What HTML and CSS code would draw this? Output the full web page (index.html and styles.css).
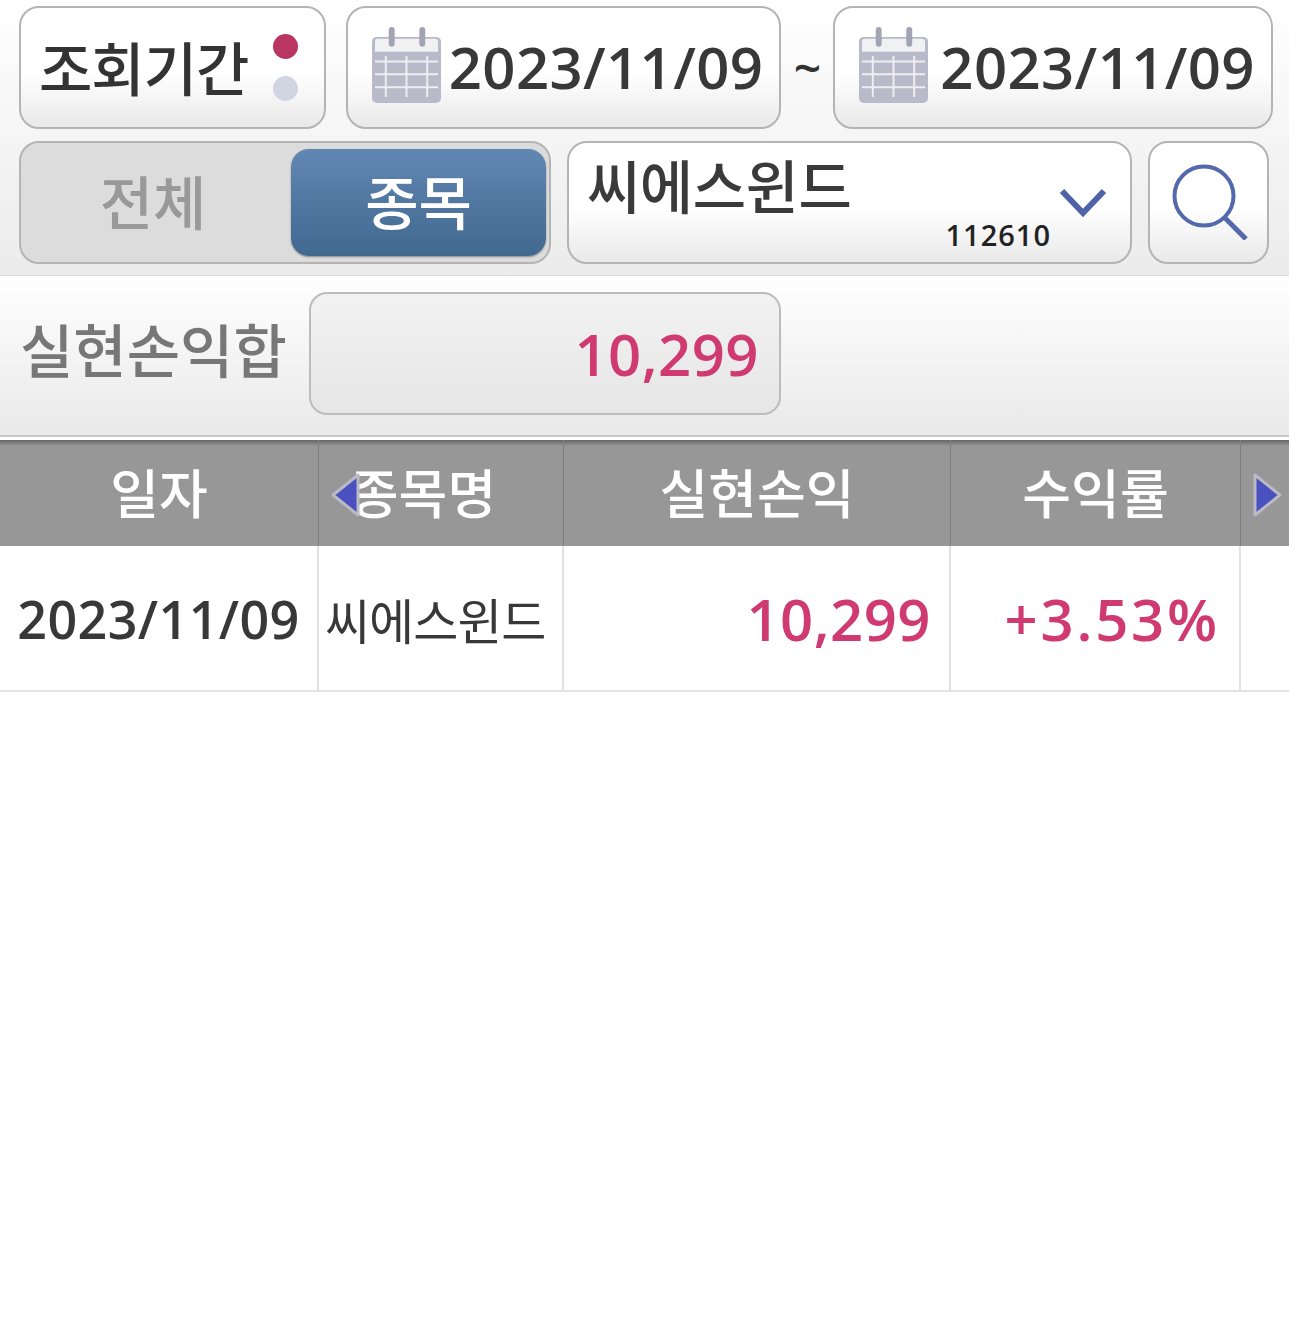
FILE: index.html
```html
<!DOCTYPE html>
<html lang="ko">
<head>
  <meta charset="UTF-8">
  <title>실현손익</title>
  <link rel="stylesheet" href="styles.css">
</head>
<body>
  <svg class="icon-defs" width="0" height="0">
    <symbol id="calendar" viewBox="0 0 70 78">
      <path d="M5 11h60a5 5 0 0 1 5 5v57a5 5 0 0 1-5 5H5a5 5 0 0 1-5-5V16a5 5 0 0 1 5-5z" fill="#b9bac9"/>
      <path d="M3 26V16a3 3 0 0 1 3-3h58a3 3 0 0 1 3 3v10z" fill="#f1f1f4"/>
      <rect x="17" y="1" width="6" height="20" rx="3" fill="#a2a3b3"/>
      <rect x="48" y="1" width="6" height="20" rx="3" fill="#a2a3b3"/>
      <path d="M3 36h64M3 49h64M3 62h64M14 30v42M35 30v42M56 30v42" stroke="#eeeef2" stroke-width="2" fill="none"/>
    </symbol>
  </svg>

  <div class="filter-panel">
    <div class="filter-row top-row">
      <div class="btn period-btn">
        <span class="period-label">조회기간</span>
        <span class="dots"><i class="dot on"></i><i class="dot"></i></span>
      </div>
      <div class="btn date-btn">
        <svg class="cal"><use href="#calendar"/></svg>
        <span class="date">2023/11/09</span>
      </div>
      <span class="tilde">~</span>
      <div class="btn date-btn date-end">
        <svg class="cal"><use href="#calendar"/></svg>
        <span class="date">2023/11/09</span>
      </div>
    </div>
    <div class="filter-row bottom-row">
      <div class="toggle">
        <span class="toggle-off">전체</span>
        <span class="toggle-on">종목</span>
      </div>
      <div class="btn stock-select">
        <span class="stock-name">씨에스윈드</span>
        <span class="stock-code">112610</span>
        <svg class="chevron" viewBox="0 0 48 30"><path d="M3 3l21 22L45 3" fill="none" stroke="#4f62a8" stroke-width="6"/></svg>
      </div>
      <div class="btn search-btn">
        <svg class="search" viewBox="0 0 76 76"><circle cx="32" cy="32" r="29.5" fill="none" stroke="#5468ad" stroke-width="4"/><path d="M52 53l22 22" stroke="#5468ad" stroke-width="5" fill="none"/></svg>
      </div>
    </div>
  </div>

  <div class="summary-panel">
    <span class="summary-label">실현손익합</span>
    <div class="summary-box">10,299</div>
  </div>

  <div class="grid head">
    <div class="cell">일자</div>
    <div class="cell th-name">종목명</div>
    <div class="cell">실현손익</div>
    <div class="cell">수익률</div>
    <div class="cell"></div>
    <svg class="arrow arrow-left" viewBox="0 0 30 46"><path d="M28 3v40L3 23z" fill="#4a50bd" stroke="#b9bac4" stroke-width="3" stroke-linejoin="round"/></svg>
    <svg class="arrow arrow-right" viewBox="0 0 30 46"><path d="M2 3v40l25-20z" fill="#4a50bd" stroke="#b9bac4" stroke-width="3" stroke-linejoin="round"/></svg>
  </div>
  <div class="grid body-row">
    <div class="cell td-date">2023/11/09</div>
    <div class="cell td-name">씨에스윈드</div>
    <div class="cell td-num td-profit">10,299</div>
    <div class="cell td-num td-rate">+3.53%</div>
    <div class="cell"></div>
  </div>
</body>
</html>
```

FILE: styles.css
```css
* {
  box-sizing: border-box;
}
body {
  margin: 0;
  min-height: 1320px;
  background: white;
  color: #333;
  font-family: "Open Sans", "Noto Sans CJK KR", sans-serif;
}
.icon-defs {
  position: absolute;
}

/* top filters */
.filter-panel {
  height: 276px;
  padding: 6px 16px 0 19px;
  background: linear-gradient(#ffffff, #ebebeb);
  border-bottom: 1px solid #dcdcdc;
}
.filter-row {
  display: flex;
  align-items: stretch;
}
.top-row {
  height: 123px;
}
.bottom-row {
  height: 123px;
  margin-top: 12px;
}
.btn {
  display: flex;
  align-items: center;
  border: 2px solid #b4b4b4;
  border-radius: 20px;
  background: linear-gradient(#ffffff 55%, #e9e9e9);
}
.period-btn {
  width: 307px;
  padding: 0 26px 0 18px;
  justify-content: space-between;
}
.period-label {
  font-family: "Noto Sans CJK KR", sans-serif;
  font-size: 58px;
  font-weight: 500;
  letter-spacing: -1px;
  margin-top: -4px;
}
.dots {
  display: flex;
  flex-direction: column;
  gap: 17px;
  margin-top: -1px;
}
.dot {
  width: 25px;
  height: 25px;
  border-radius: 50%;
  background: #d1d4e2;
}
.dot.on {
  background: #bb3562;
}
.date-btn {
  padding-left: 24px;
  margin-left: 20px;
  width: 436px;
}
.date-end {
  margin-left: 0;
  width: 440px;
}
.cal {
  width: 69px;
  height: 77px;
  flex: none;
  margin-top: -6px;
}
.date {
  font-size: 58px;
  font-weight: 600;
  letter-spacing: 0.4px;
  margin-left: 8px;
  margin-top: -2px;
  color: #383838;
}
.date-end .date {
  margin-left: 12px;
}
.tilde {
  width: 52px;
  text-align: center;
  font-size: 48px;
  font-weight: 600;
  line-height: 123px;
}

.toggle {
  width: 532px;
  display: flex;
  align-items: center;
  padding: 6px 3px 6px 6px;
  border: 2px solid #b4b4b4;
  border-radius: 20px;
  background: #dcdcdc;
  font-family: "Noto Sans CJK KR", sans-serif;
  font-size: 58px;
  font-weight: 500;
}
.toggle-off {
  width: 252px;
  margin-right: 12px;
  margin-top: -6px;
  text-align: center;
  color: #999;
}
.toggle-on {
  flex: 1;
  height: 107px;
  display: flex;
  align-items: center;
  justify-content: center;
  padding-bottom: 6px;
  border-radius: 18px;
  color: white;
  background: linear-gradient(#6187b3, #41688f);
  box-shadow: 0 1px 2px #888;
}
.stock-select {
  position: relative;
  width: 565px;
  margin-left: 16px;
}
.stock-name {
  position: absolute;
  left: 18px;
  top: -1px;
  font-family: "Noto Sans CJK KR", sans-serif;
  font-size: 58px;
  font-weight: 500;
  letter-spacing: -0.5px;
  color: #3a3a3a;
}
.stock-code {
  position: absolute;
  right: 79px;
  bottom: 8px;
  font-size: 29px;
  font-weight: 600;
  letter-spacing: 1px;
  color: #222;
}
.chevron {
  position: absolute;
  left: 490px;
  top: 45px;
  width: 48px;
  height: 30px;
}
.search-btn {
  width: 121px;
  margin-left: 16px;
  justify-content: center;
}
.search {
  width: 76px;
  height: 76px;
  margin: -2px -2px 0 0;
}

/* realized profit summary */
.summary-panel {
  height: 161px;
  display: flex;
  padding: 16px 0 0 20px;
  background: linear-gradient(#ffffff, #e9e9e9);
  border-bottom: 2px solid #c8c8c8;
}
.summary-label {
  width: 289px;
  font-family: "Noto Sans CJK KR", sans-serif;
  font-size: 58px;
  font-weight: 500;
  line-height: 112px;
  color: #777;
}
.summary-box {
  width: 472px;
  height: 123px;
  padding-right: 20px;
  border: 2px solid #bcbcbc;
  border-radius: 18px;
  background: linear-gradient(#f2f2f2, #e6e6e6);
  text-align: right;
  font-size: 58px;
  font-weight: 600;
  letter-spacing: 0.5px;
  line-height: 120px;
  color: #cf3a70;
}

/* table */
.grid {
  display: grid;
  grid-template-columns: 319px 245px 387px 290px 48px;
  position: relative;
}
.head {
  height: 106px;
  margin-top: 3px;
  background: linear-gradient(#666, #979797 6px);
  color: white;
  font-family: "Noto Sans CJK KR", sans-serif;
  font-size: 53px;
  font-weight: 500;
}
.head .cell {
  display: flex;
  align-items: center;
  justify-content: center;
  border-right: 1px solid #808080;
  padding-bottom: 4px;
}
.head .cell:last-of-type {
  border-right: none;
}
.head .th-name {
  padding-right: 36px;
}
.arrow {
  position: absolute;
  top: 32px;
  width: 30px;
  height: 46px;
}
.arrow-left {
  left: 330px;
}
.arrow-right {
  left: 1253px;
}
.body-row {
  height: 146px;
  border-bottom: 2px solid #e2e2e2;
}
.body-row .cell {
  display: flex;
  align-items: center;
  border-right: 2px solid #e2e2e2;
  font-size: 52px;
  font-weight: 600;
  letter-spacing: 0.4px;
  color: #383838;
}
.body-row .cell:last-child {
  border-right: none;
}
.td-date {
  justify-content: center;
}
.body-row .td-name {
  padding-left: 6px;
  font-family: "Noto Sans CJK KR", sans-serif;
  font-size: 49px;
  font-weight: 400;
  letter-spacing: -1px;
}
.body-row .td-num {
  justify-content: flex-end;
  color: #cf3a70;
  font-size: 58px;
  letter-spacing: 0.5px;
}
.td-profit {
  padding-right: 18px;
}
.body-row .td-rate {
  padding-right: 19px;
  letter-spacing: 2.8px;
}
```
